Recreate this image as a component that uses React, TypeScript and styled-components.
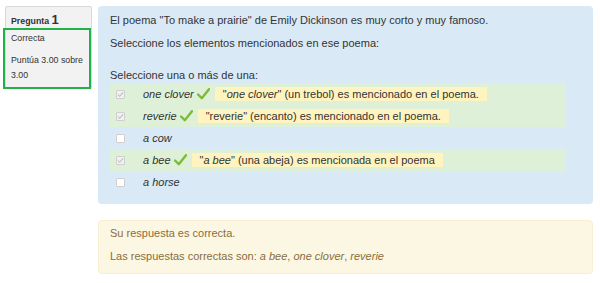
import React, { FC } from 'react';
import styled, { createGlobalStyle } from 'styled-components';

// Page reset and base font
const GlobalStyle = createGlobalStyle`
	html, body {
		margin: 0;
		padding: 0;
		background: #ffffff;
	}
	body {
		font-family: 'Liberation Sans', Arial, sans-serif;
		color: #333333;
	}
`;

// Outer layout: info column on the left, question content on the right
const Question = styled.div`
	display: grid;
	grid-template-columns: 87px 1fr;
	column-gap: 6px;
	align-items: start;
	padding: 6px 7px 8px 5px;
`;

// Grey info panel with the question number
const InfoPanel = styled.div`
	background-color: #f2f2f2;
	border: 1px solid #d9d9d9;
	border-radius: 2px;
	font-size: 8.8px;
	color: #333;
`;

const QuestionNumber = styled.h3`
	margin: 0 0 2px 0;
	padding: 4px 0 0 5px;
	height: 15px;
	line-height: 17px;
	font-size: 8.8px;
	font-weight: bold;

	span {
		font-size: 13px;
	}
`;

// Green outline around state + grade
const StateBox = styled.div`
	margin: 0 0 -1px -3px;
	border: 2px solid #22b04b;
	padding: 1px 4px 4px 6px;
`;

const InfoLine = styled.div<{ gap?: number }>`
	line-height: 15px;
	margin-top: ${(props) => props.gap ?? 0}px;
`;

// Right column
const Content = styled.div`
	display: flex;
	flex-direction: column;
	gap: 16px;
`;

const Formulation = styled.div`
	background-color: #d9eaf6;
	border-radius: 4px;
	padding: 6px 12px 11px 12px;
	font-size: 11px;
	line-height: 16px;
`;

const Paragraph = styled.p<{ gap?: number }>`
	margin: ${(props) => props.gap ?? 0}px 0 0 0;
`;

const Prompt = styled.div`
	margin-top: 16px;
	line-height: 16px;
`;

const Answer = styled.div`
	margin-right: 15px;
	display: flex;
	flex-direction: column;
`;

const OptionRow = styled.div<{ correct?: boolean }>`
	display: flex;
	align-items: center;
	height: 22px;
	padding-left: 6px;
	background-color: ${(props) => (props.correct ? '#dff0d8' : 'transparent')};
`;

const Checkbox = styled.span<{ checked?: boolean }>`
	box-sizing: border-box;
	width: 9px;
	height: 9px;
	border: 1px solid #cfcfcf;
	border-radius: 1px;
	background-color: ${(props) => (props.checked ? '#f1f1f1' : '#ffffff')};
	margin-right: 18px;
	display: flex;
	align-items: center;
	justify-content: center;
`;

const OptionLabel = styled.span`
	font-style: italic;
`;

const TickWrap = styled.span`
	display: inline-flex;
	margin-left: 3px;
`;

const Feedback = styled.span`
	display: inline-block;
	margin-left: 5px;
	padding: 0 8px;
	line-height: 14px;
	background-color: #fff3bf;
`;

// Yellow outcome box
const Outcome = styled.div`
	background-color: #fcf7e3;
	border: 1px solid #f8efd2;
	border-radius: 4px;
	padding: 4px 12px 9px 11px;
	font-size: 11px;
	line-height: 16px;
	color: #8a6d3b;
`;

const CheckMark: FC = () => (
	<svg width="8" height="7" viewBox="0 0 8 7">
		<path d="M1 3.5 L3 5.5 L7 1" fill="none" stroke="#bdbdbd" strokeWidth="1.2" />
	</svg>
);

const Tick: FC = () => (
	<svg width="13" height="12" viewBox="0 0 13 12">
		<path d="M1 6.5 L4.8 10.2 L12 1.2" fill="none" stroke="#7cbb3a" strokeWidth="2.4" strokeLinecap="round" strokeLinejoin="round" />
	</svg>
);

interface OptionProps {
	label: string;
	checked?: boolean;
	feedback?: React.ReactNode;
}

const Option: FC<OptionProps> = ({ label, checked, feedback }) => (
	<OptionRow correct={checked}>
		<Checkbox checked={checked}>{checked && <CheckMark />}</Checkbox>
		<OptionLabel>{label}</OptionLabel>
		{checked && (
			<TickWrap>
				<Tick />
			</TickWrap>
		)}
		{feedback && <Feedback>{feedback}</Feedback>}
	</OptionRow>
);

export default function App() {
	return (
		<>
			<GlobalStyle />
			<Question>
				<InfoPanel>
					<QuestionNumber>
						Pregunta <span>1</span>
					</QuestionNumber>
					<StateBox>
						<InfoLine>Correcta</InfoLine>
						<InfoLine gap={7}>Puntúa 3.00 sobre 3.00</InfoLine>
					</StateBox>
				</InfoPanel>

				<Content>
					<Formulation>
						<Paragraph>El poema "To make a prairie" de Emily Dickinson es muy corto y muy famoso.</Paragraph>
						<Paragraph gap={7}>Seleccione los elementos mencionados en ese poema:</Paragraph>
						<Prompt>Seleccione una o más de una:</Prompt>
						<Answer>
							<Option
								label="one clover"
								checked
								feedback={
									<>
										"<i>one clover</i>" (un trebol) es mencionado en el poema.
									</>
								}
							/>
							<Option label="reverie" checked feedback={'"reverie" (encanto) es mencionado en el poema.'} />
							<Option label="a cow" />
							<Option
								label="a bee"
								checked
								feedback={
									<>
										"<i>a bee</i>" (una abeja) es mencionada en el poema
									</>
								}
							/>
							<Option label="a horse" />
						</Answer>
					</Formulation>

					<Outcome>
						<Paragraph>Su respuesta es correcta.</Paragraph>
						<Paragraph gap={7}>
							Las respuestas correctas son: <i>a bee</i>, <i>one clover</i>, <i>reverie</i>
						</Paragraph>
					</Outcome>
				</Content>
			</Question>
		</>
	);
}
